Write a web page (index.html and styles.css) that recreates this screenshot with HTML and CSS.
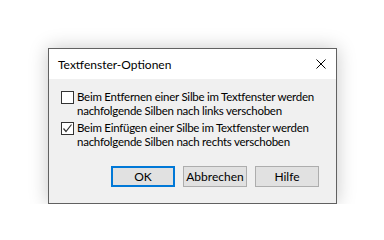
FILE: index.html
```html
<!DOCTYPE html>
<html>
<head>
<meta charset="utf-8">
<link rel="stylesheet" href="styles.css">
</head>
<body>
<div class="dialog">
  <div class="titlebar">
    <span class="title">Textfenster-Optionen</span>
    <svg class="close" width="10" height="10" viewBox="0 0 10 10"><path d="M0.5 0.5L9.5 9.5M9.5 0.5L0.5 9.5" stroke="#000" stroke-width="1" fill="none"/></svg>
  </div>
  <div class="content">
    <div class="option">
      <span class="box"></span>
      <span class="label">Beim Entfernen einer Silbe im Textfenster werden<br>nachfolgende Silben nach links verschoben</span>
    </div>
    <div class="option">
      <span class="box"><svg width="11" height="11" viewBox="0 0 11 11"><path d="M1.5 5.5L4 8.5L9.5 1.5" stroke="#333" stroke-width="1.2" fill="none"/></svg></span>
      <span class="label">Beim Einfügen einer Silbe im Textfenster werden<br>nachfolgende Silben nach rechts verschoben</span>
    </div>
    <div class="buttons">
      <button class="btn default">OK</button>
      <button class="btn">Abbrechen</button>
      <button class="btn">Hilfe</button>
    </div>
  </div>
</div>
</body>
</html>
```
FILE: styles.css
```css
html, body {
  margin: 0;
  padding: 0;
  background: #ffffff;
}
body {
  padding: 48px 0 0 48px;
  font-family: Lato, "Noto Sans", sans-serif;
  font-size: 12px;
  color: #000;
}
.dialog {
  width: 287px;
  height: 154px;
  border: 1px solid #616161;
  background: #f0f0f0;
  box-shadow: 0 0 18px rgba(0, 0, 0, 0.22);
  display: flex;
  flex-direction: column;
}
.titlebar {
  height: 30px;
  background: #ffffff;
  display: flex;
  align-items: center;
  justify-content: space-between;
  padding: 0 10px 0 9px;
}
.title {
  font-size: 12px;
  white-space: nowrap;
}
.close {
  display: block;
}
.content {
  padding: 12px 17px 0 12px;
  display: flex;
  flex-direction: column;
}
.option {
  display: flex;
  align-items: flex-start;
  gap: 3px;
  line-height: 14px;
  margin-bottom: 4px;
  font-size: 11.5px;
  letter-spacing: -0.25px;
}
.box {
  width: 11px;
  height: 11px;
  border: 1px solid #333;
  background: #fff;
  flex: none;
  display: flex;
  align-items: center;
  justify-content: center;
}
.box svg { display: block; }
.label {
  margin-top: -1px;
  white-space: nowrap;
}
.buttons {
  display: flex;
  justify-content: flex-end;
  gap: 8px;
  margin-top: 13px;
}
.btn {
  width: 64px;
  height: 21px;
  border: 1px solid #adadad;
  background: #e1e1e1;
  font-family: inherit;
  font-size: 12px;
  color: #000;
  padding: 0;
  margin: 0;
}
.btn.default {
  border: 2px solid #0078d7;
}
```
